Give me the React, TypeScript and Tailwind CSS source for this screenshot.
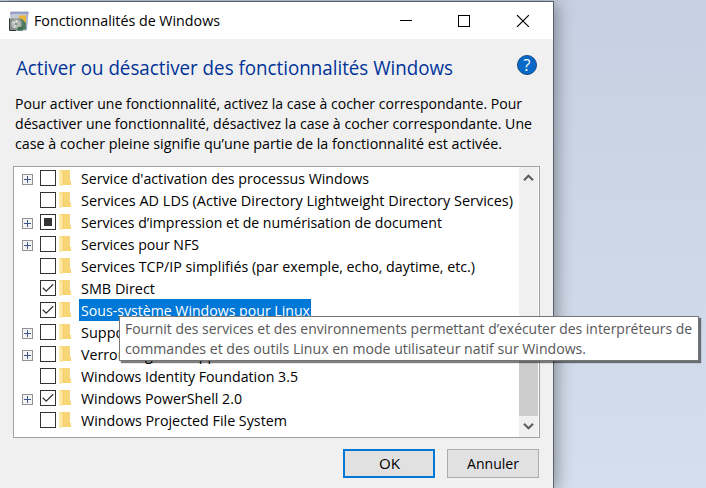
import { useLayoutEffect, useRef } from 'react';

type FitProps = { text: string; width: number; className?: string };

// Scales a single line of text so that it occupies exactly `width` pixels.
function Fit({ text, width, className = '' }: FitProps) {
  const ref = useRef<HTMLSpanElement>(null);
  useLayoutEffect(() => {
    const el = ref.current;
    if (!el) return;
    el.style.transform = 'none';
    const natural = el.getBoundingClientRect().width;
    el.style.transform = `scaleX(${width / natural})`;
  }, [text, width]);
  return (
    <span className="block shrink-0" style={{ width }}>
      <span ref={ref} className={`inline-block origin-left whitespace-nowrap ${className}`}>
        {text}
      </span>
    </span>
  );
}

type State = 'off' | 'on' | 'partial';
type Feature = { label: string; width: number; state: State; expandable?: boolean; selected?: boolean };

const features: Feature[] = [
  { label: "Service d'activation des processus Windows", width: 288, state: 'off', expandable: true },
  { label: 'Services AD LDS (Active Directory Lightweight Directory Services)', width: 432, state: 'off' },
  { label: 'Services d’impression et de numérisation de document', width: 361, state: 'partial', expandable: true },
  { label: 'Services pour NFS', width: 118, state: 'off', expandable: true },
  { label: 'Services TCP/IP simplifiés (par exemple, echo, daytime, etc.)', width: 394, state: 'off' },
  { label: 'SMB Direct', width: 74, state: 'on' },
  { label: 'Sous-système Windows pour Linux', width: 229, state: 'on', selected: true },
  { label: 'Support de partage de fichiers SMB 1.0/CIFS', width: 296, state: 'off', expandable: true },
  { label: 'Verrouillage de l’appareil', width: 164, state: 'off', expandable: true },
  { label: 'Windows Identity Foundation 3.5', width: 217, state: 'off' },
  { label: 'Windows PowerShell 2.0', width: 161, state: 'on', expandable: true },
  { label: 'Windows Projected File System', width: 206, state: 'off' },
];

function Expander() {
  return (
    <svg width="11" height="11" viewBox="0 0 11 11" shapeRendering="crispEdges">
      <rect x=".5" y=".5" width="10" height="10" fill="#f3f3f3" stroke="#929292" />
      <path d="M2 5.5h7M5.5 2v7" stroke="#3d548c" />
    </svg>
  );
}

function Checkbox({ state }: { state: State }) {
  return (
    <svg width="16" height="16" viewBox="0 0 16 16">
      <rect x=".5" y=".5" width="15" height="15" fill="#fff" stroke="#333" />
      {state === 'partial' && <rect x="4" y="4" width="8" height="8" fill="#333" />}
      {state === 'on' && <path d="M2.8 7.8 6.2 11.2 13.2 4.2" fill="none" stroke="#333" strokeWidth="1.3" />}
    </svg>
  );
}

function Folder() {
  return (
    <svg width="13" height="17" viewBox="0 0 13 17">
      <path d="M1 1h10v10.5l1 .5v4H1z" fill="#f8d675" />
      <path d="M9 1h2v11H9z" fill="#f5d580" />
      <path d="M0 .5 4 3v11.5L1.5 17 0 16z" fill="#ffe9a6" />
      <path d="M4 3v11.5L1.8 16.8" fill="none" stroke="#edc65e" strokeWidth=".6" />
    </svg>
  );
}

function AppIcon() {
  return (
    <svg width="20" height="20" viewBox="0 0 20 20">
      <path d="M1 1h18.500L18 19.500H3z" fill="#aab2cd" />
      <path d="M1.500 .5h18V3h-18z" fill="#98a0c6" />
      <path d="M2.500 3H17v14H3z" fill="#c4c9d3" />
      <path d="M10 4.500h7V12h-3V8h-4z" fill="#e8b636" />
      <path d="M11 8h3v3h-3z" fill="#c2d4de" />
      <path d="M9 8h4l4 4v6.500H9z" fill="#4d7d60" />
      <path d="M0 7.500h12l1 3.500v8.500H0z" fill="#858b85" />
      <path d="M.5 7.500v12H7" fill="none" stroke="#343a3b" />
      <ellipse cx="7" cy="13" rx="5" ry="4.500" fill="#b3b9b3" />
      <path d="m3.500 11 3.500 2 1-4M7 13l-2 4" stroke="#dfe3de" strokeWidth="1.300" fill="none" />
      <circle cx="7" cy="13" r="1.100" fill="#747b75" />
      <path d="M9 16h5v3.500H8z" fill="#3d6f50" />
    </svg>
  );
}

function Chevron({ up = false }: { up?: boolean }) {
  return (
    <svg width="11" height="8" viewBox="0 0 11 8" className={up ? '' : 'rotate-180'}>
      <path d="M1 6.300 5.500 1.800 10 6.300" fill="none" stroke="#606060" strokeWidth="2.200" />
    </svg>
  );
}

function TitleBar() {
  return (
    <header className="flex h-[37px] items-center bg-white pl-[9px]">
      <AppIcon />
      <div className="ml-[5px] flex-1 leading-[20px]">
        <Fit text="Fonctionnalités de Windows" width={186} />
      </div>
      <div className="flex gap-[46px] pr-6">
        <svg width="12" height="12" shapeRendering="crispEdges">
          <path d="M0 5.500h12" stroke="#000" />
        </svg>
        <svg width="12" height="12" shapeRendering="crispEdges">
          <rect x=".5" y=".5" width="11" height="11" fill="none" stroke="#000" />
        </svg>
        <svg width="13" height="12">
          <path d="M1 0l12 12M13 0l-12 12" stroke="#000" strokeWidth="1.100" />
        </svg>
      </div>
    </header>
  );
}

function FeatureRow({ f }: { f: Feature }) {
  return (
    <li className="flex h-[22px] items-start pl-2">
      <span className="mt-[7px] w-[18px]">{f.expandable && <Expander />}</span>
      <span className="mt-[3px]">
        <Checkbox state={f.state} />
      </span>
      <span className="mt-[2px] ml-[3px] w-[13px]">
        <Folder />
      </span>
      <div
        className={`ml-[7px] h-[22px] pt-px pr-px pl-[2px] leading-[22px] ${f.selected ? 'bg-[#0078d7] text-white' : ''}`}
      >
        <Fit text={f.label} width={f.width} />
      </div>
    </li>
  );
}

export default function App() {
  return (
    <div className="relative h-[488px] w-[706px] overflow-hidden bg-linear-to-b from-[#c7d0e2] to-[#d5deed] font-['Open_Sans','Noto_Sans',sans-serif] text-[14.5px] text-black [&_svg]:block">
      <div className="flex">
        <main className="mt-px h-[487px] w-[554px] border-t border-r border-[#596171] bg-[#f0f0f0] shadow-[2px_2px_16px_rgba(0,0,0,0.4)]">
          <TitleBar />
          <section className="flex items-start justify-between pt-[15px] pr-4 pl-4">
            <h1 className="mt-[1px] text-[19.5px] leading-[26px] text-[#003399]">
              <Fit text="Activer ou désactiver des fonctionnalités Windows" width={437} />
            </h1>
            <div className="mt-[1px] flex h-5 w-5 items-center justify-center rounded-full border border-[#174b83] bg-[#0669c7] text-[16px] leading-none text-white">
              ?
            </div>
          </section>
          <p className="mt-[13px] pl-[15px] leading-[20px]">
            <Fit text="Pour activer une fonctionnalité, activez la case à cocher correspondante. Pour" width={507} />
            <Fit text="désactiver une fonctionnalité, désactivez la case à cocher correspondante. Une" width={517} />
            <Fit text="case à cocher pleine signifie qu’une partie de la fonctionnalité est activée." width={487} />
          </p>
          <section className="mt-[12px] ml-[13px] flex h-[272px] w-[527px] justify-between border border-[#a0a0a0] bg-white pr-px">
            <ul>
              {features.map((f) => (
                <FeatureRow key={f.label} f={f} />
              ))}
            </ul>
            <div className="flex w-[19px] flex-col items-center bg-[#f0f0f0]">
              <div className="flex h-[21px] items-center">
                <Chevron up />
              </div>
              <div className="mt-[152px] h-[76px] w-full bg-[#cdcdcd]" />
              <div className="flex h-[20px] items-center">
                <Chevron />
              </div>
            </div>
          </section>
          <footer className="mt-[11px] flex justify-end gap-3 pr-[14px]">
            <button className="flex h-[29px] w-[92px] items-center justify-center border-2 border-[#0078d7] bg-[#e1e1e1]">
              <Fit text="OK" width={21} />
            </button>
            <button className="flex h-[29px] w-[92px] items-center justify-center border border-[#adadad] bg-[#e1e1e1]">
              <Fit text="Annuler" width={52} />
            </button>
          </footer>
        </main>
      </div>
      <div className="absolute top-[316px] left-[119px] h-[45px] w-[580px] border border-[#767676] bg-white pt-[2px] pl-[5px] leading-[20px] text-[#575757] shadow-[2px_2px_1px_rgba(0,0,0,0.5)]">
        <Fit text="Fournit des services et des environnements permettant d’exécuter des interpréteurs de" width={567} />
        <Fit text="commandes et des outils Linux en mode utilisateur natif sur Windows." width={461} />
      </div>
    </div>
  );
}
